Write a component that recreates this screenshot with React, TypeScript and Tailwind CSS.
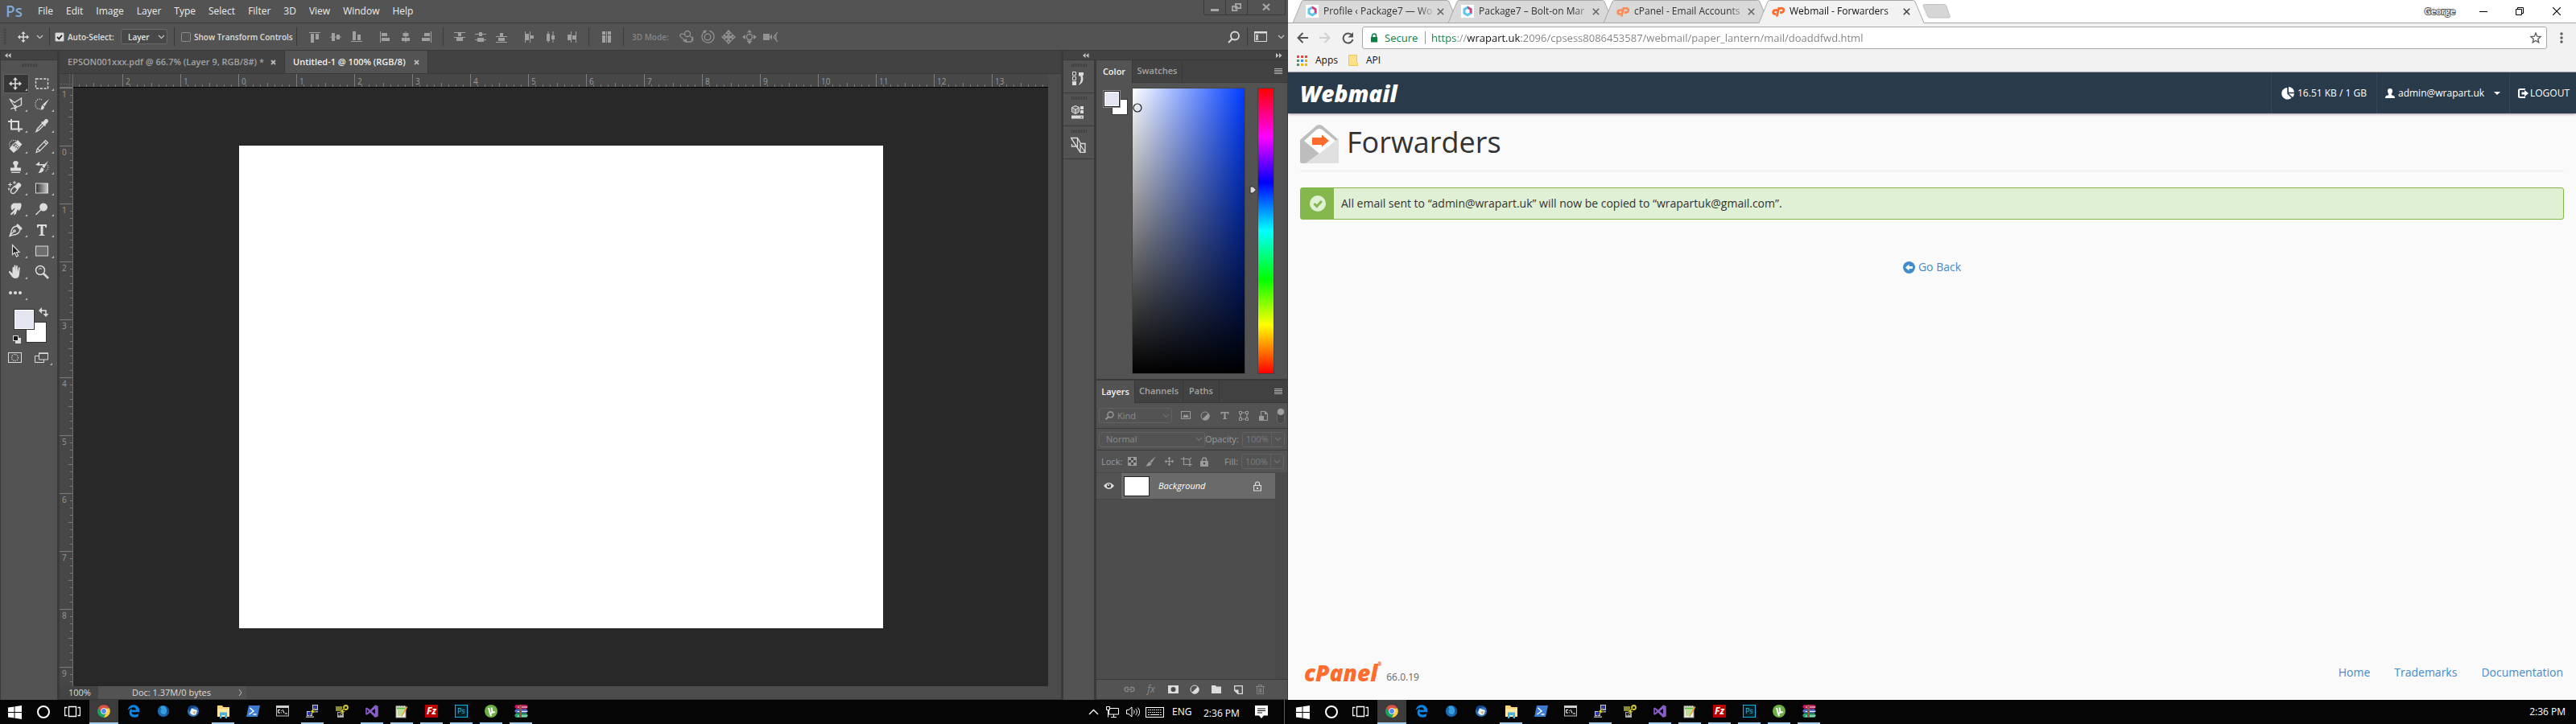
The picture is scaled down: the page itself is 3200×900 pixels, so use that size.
import React from "react";
import type { ReactNode } from "react";
import { FaEdgeLegacy } from "react-icons/fa6";
import { DiVisualstudio } from "react-icons/di";

const light = "#dcdcdc";

function Svg({ w = 18, h = 18, box, className = "", children }: { w?: number; h?: number; box?: string; className?: string; children: ReactNode }) {
  return (
    <svg width={w} height={h} viewBox={box ?? `0 0 ${w} ${h}`} className={`shrink-0 ${className}`} aria-hidden="true">
      {children}
    </svg>
  );
}

/* ---------- shared glyphs ---------- */

const movePath =
  "M9 1l3 3.4H9.8v3.8h3.8V6L17 9l-3.4 3V9.8H9.8v3.8H12L9 17l-3-3.4h2.2V9.8H4.4V12L1 9l3.4-3v2.2h3.8V4.4H6z";

function Chevron({ stroke = "#c8c8c8", className = "" }: { stroke?: string; className?: string }) {
  return (
    <Svg w={9} h={6} className={className}>
      <path d="M1 1l3.5 3.5L8 1" fill="none" stroke={stroke} strokeWidth="1.2" />
    </Svg>
  );
}

function Divider() {
  return <span className="h-[23px] w-px shrink-0 bg-[#3a3a3a]" />;
}

function Cell({ w, children, label }: { w: string; children: ReactNode; label: string }) {
  return (
    <button aria-label={label} className={`flex h-6 shrink-0 items-center justify-center ${w}`}>
      {children}
    </button>
  );
}

/* ---------- Photoshop: menu and options ---------- */

const menus = ["File", "Edit", "Image", "Layer", "Type", "Select", "Filter", "3D", "View", "Window", "Help"];

function MenuBar() {
  return (
    <header className="flex h-[29px] shrink-0 items-start justify-between border-b border-[#383838] bg-[#535353]">
      <div className="flex h-7 items-center">
        <span className="w-[47px] pl-[7px] text-[19px] leading-6 font-semibold text-[#7fa9d6]">Ps</span>
        <nav className="flex gap-4">
          {menus.map((m) => (
            <button key={m} className="text-[12px] leading-4 text-[#ececec]">
              {m}
            </button>
          ))}
        </nav>
      </div>
      <div className="mr-[3px] flex h-[19px] rounded-b-[3px] border border-t-0 border-[#3c3c3c]">
        <button aria-label="Minimize" className="flex w-[27px] items-center justify-center border-r border-[#3c3c3c]">
          <Svg w={12} h={12}><rect x="1" y="8" width="10" height="3" fill="#a8a8a8" /></Svg>
        </button>
        <button aria-label="Restore" className="flex w-[27px] items-center justify-center border-r border-[#3c3c3c]">
          <Svg w={12} h={12}>
            <path d="M4.8 1.8h6.4v5.4H4.8zM1 4.8h5.4v5.4H1z" fill="#535353" stroke="#a8a8a8" strokeWidth="1.7" />
          </Svg>
        </button>
        <button aria-label="Close" className="flex w-[46px] items-center justify-center">
          <Svg w={12} h={12}><path d="M2 2l8 7.5M10 2L2 9.5" stroke="#a8a8a8" strokeWidth="2.2" /></Svg>
        </button>
      </div>
    </header>
  );
}

const alignIcons: Record<string, ReactNode> = {
  "Align top": <path d="M0 1h14v1H0zM2 3h4v11H2zM8 3h4v7H8z" />,
  "Align middle": <path d="M0 6.500h14v1H0zM2 2h4v10H2zM8 4h4v6H8z" />,
  "Align bottom": <path d="M0 12h14v1H0zM2 0h4v11H2zM8 4h4v7H8z" />,
  "Align left": <path d="M1 0h1v14H1zM3 2h7v4H3zM3 8h10v4H3z" />,
  "Align center": <path d="M6.500 0h1v14h-1zM3.500 2h7v4h-7zM2 8h10v4H2z" />,
  "Align right": <path d="M12 0h1v14h-1zM4 2h7v4H4zM1 8h10v4H1z" />,
  "Distribute top": <path d="M0 1h14v1H0zM5 2h4v4H5zM0 7h14v1H0zM3 8h8v4H3z" />,
  "Distribute vertical": <path d="M0 3h14v1H0zM5 1h4v5H5zM0 10h14v1H0zM3 8h8v5H3z" />,
  "Distribute bottom": <path d="M0 6h14v1H0zM5 2h4v4H5zM0 13h14v1H0zM3 8h8v4H3z" />,
  "Distribute left": <path d="M1 0h1v14H1zM2 3h4v8H2zM7 0h1v14H7zM8 5h4v4H8z" />,
  "Distribute horizontal": <path d="M3.500 0h1v14h-1zM2 3h4v9H2zM9.500 0h1v14h-1zM8 5h4v5H8z" />,
  "Distribute right": <path d="M6 0h1v14H6zM2 4h4v7H2zM12 0h1v14h-1zM8 5h4v5H8z" />,
  "Auto-align": <path d="M2 0h4v4H2zM2 5h4v9H2zM7 0h1v14H7zM9 0h4v4H9zM9 5h4v9H9z" />,
};

function AlignButton({ name }: { name: string }) {
  return (
    <Cell w="w-[26px]" label={name}>
      <Svg w={14} h={14}>
        <g fill="#a0a0a0">{alignIcons[name]}</g>
      </Svg>
    </Cell>
  );
}

function Check({ id, label, on }: { id: string; label: string; on?: boolean }) {
  return (
    <label htmlFor={id} className="flex shrink-0 items-center gap-1 text-[10px] leading-4 font-semibold whitespace-nowrap text-[#dedede]">
      <span className="grid">
        <input
          id={id}
          type="checkbox"
          defaultChecked={on}
          className="peer col-start-1 row-start-1 size-[12px] appearance-none rounded-[2px] border border-[#8a8a8a] checked:bg-[#dcdcdc]"
        />
        <Svg w={12} h={12} className="pointer-events-none invisible col-start-1 row-start-1 peer-checked:visible">
          <path d="M3 6l2.300 2.300L9 3.800" fill="none" stroke="#222" strokeWidth="1.800" />
        </Svg>
      </span>
      {label}
    </label>
  );
}

function Picker({ label, value, width, dim, pad = "pl-2" }: { label: string; value: string; width: string; dim?: boolean; pad?: string }) {
  return (
    <span className={`grid shrink-0 items-center ${width}`}>
      <select
        aria-label={label}
        className={`col-start-1 row-start-1 h-[19px] w-full appearance-none rounded-[3px] border leading-4 ${pad} ${
          dim ? "border-[#626262] text-[11px] text-[#8c8c8c]" : "border-[#6a6a6a] bg-[#484848] text-[10px] font-semibold text-[#e4e4e4]"
        }`}
      >
        <option>{value}</option>
      </select>
      <Chevron stroke={dim ? "#707070" : "#c8c8c8"} className="pointer-events-none col-start-1 row-start-1 mr-[3px] justify-self-end" />
    </span>
  );
}

function OptionsBar() {
  return (
    <div className="flex h-[34px] shrink-0 items-center justify-between border-b border-[#383838] bg-[#535353]">
      <div className="flex items-center">
        <Svg w={9} h={20} className="ml-1"><path d="M2 0v20" stroke="#3f3f3f" strokeWidth="3" strokeDasharray="1 1" /></Svg>
        <Cell w="ml-2 w-4" label="Move tool"><Svg w={16} h={16} box="0 0 18 18"><path d={movePath} fill={light} /></Svg></Cell>
        <Cell w="w-6" label="Tool presets"><Chevron /></Cell>
        <Divider />
        <div className="flex w-[154px] items-center justify-between pr-2 pl-[6px]">
          <Check id="auto-select" label="Auto-Select:" on />
          <Picker label="Auto-select target" value="Layer" width="w-[58px]" />
        </div>
        <Divider />
        <div className="w-[151px] pl-2">
          <Check id="show-transform" label="Show Transform Controls" />
        </div>
        <Divider />
        <div className="flex w-[181px] items-center pl-[9px]">
          {["Align top", "Align middle", "Align bottom"].map((n) => <AlignButton key={n} name={n} />)}
          <span className="w-[9px]" />
          {["Align left", "Align center", "Align right"].map((n) => <AlignButton key={n} name={n} />)}
        </div>
        <Divider />
        <div className="flex w-[180px] items-center pl-[7px]">
          {["Distribute top", "Distribute vertical", "Distribute bottom"].map((n) => <AlignButton key={n} name={n} />)}
          <span className="w-[9px]" />
          {["Distribute left", "Distribute horizontal", "Distribute right"].map((n) => <AlignButton key={n} name={n} />)}
        </div>
        <Divider />
        <div className="flex w-[42px] justify-center"><AlignButton name="Auto-align" /></div>
        <Divider />
        <span className="w-[65px] pl-[10px] text-[10px] leading-4 font-semibold whitespace-nowrap text-[#868686]">3D Mode:</span>
        <div className="flex">
          <Cell w="w-[26px]" label="Orbit">
            <Svg>
              <g fill="none" stroke="#929292" strokeWidth="1.3"><circle cx="10" cy="5" r="3.500" /><path d="M7 6C0 3-1 8 4 11l3 2M13 8c5 2 5 6 0 7H8M15 13l2-4" /></g>
              <path d="M4 14l5-3v5z" fill="#929292" />
            </Svg>
          </Cell>
          <Cell w="w-[26px]" label="Roll">
            <Svg>
              <g fill="none" stroke="#929292" strokeWidth="1.300"><circle cx="9" cy="9" r="3.800" /><path d="M6 2a7.500 7.500 0 1 0 5-.700" /></g>
              <path d="M3 1l5-.500-2 4z" fill="#929292" />
            </Svg>
          </Cell>
          <Cell w="w-[26px]" label="Pan"><Svg><path d={movePath} fill="none" stroke="#929292" strokeWidth="1.400" /></Svg></Cell>
          <Cell w="w-[26px]" label="Slide">
            <Svg>
              <circle cx="9" cy="9" r="3.500" fill="none" stroke="#929292" strokeWidth="1.400" />
              <path d="M9 0l3 3.500H6zM0 9l4-3v6zM18 9l-4-3v6zM9 18l-3.500-4.500h7z" fill="#929292" />
            </Svg>
          </Cell>
          <Cell w="w-[26px]" label="Zoom camera">
            <Svg>
              <path d="M0 5h8v8H0zM8 9l3-4v8z" fill="#929292" /><path d="M18 3l-5 6 5 6M16 5v8" fill="none" stroke="#929292" strokeWidth="1.200" />
            </Svg>
          </Cell>
        </div>
      </div>
      <div className="flex items-center">
        <Cell w="w-8" label="Search">
          <Svg w={16} h={16}><circle cx="9" cy="6.500" r="5" fill="none" stroke={light} strokeWidth="1.800" /><path d="M5.500 10.500L1 15" stroke={light} strokeWidth="2" /></Svg>
        </Cell>
        <Divider />
        <Cell w="w-8" label="Workspace">
          <Svg w={16} h={14}><path d="M.5 1.500h15v11H.5z" fill="none" stroke={light} /><path d="M0 0h16v2.500H0zM2 4h3v7H2z" fill={light} /><path d="M3 5h1v1H3zM3 7h1v1H3zM3 9h1v1H3z" fill="#535353" /></Svg>
        </Cell>
        <Cell w="w-[18px]" label="Workspace menu"><Chevron /></Cell>
      </div>
    </div>
  );
}

/* ---------- Photoshop: toolbox ---------- */

const tools: { name: string; art: ReactNode; plain?: boolean }[] = [
  { name: "Move", art: <path d={movePath} fill={light} /> },
  { name: "Marquee", art: <rect x="1.500" y="3" width="15" height="12" fill="none" stroke={light} strokeWidth="1.300" strokeDasharray="3.200 1.600" /> },
  { name: "Lasso", art: <path d="M2 2l6 4.500L16.500 1v8.500L9 13 2 2zM8 10c3 0 3 4 0 3.500S4 14 3.500 15M8 13l2 4" fill="none" stroke={light} strokeWidth="1.300" /> },
  {
    name: "Quick selection",
    art: (
      <g>
        <path d="M9 3C5 1 1 3 1 8.500S4 15 8 14" fill="none" stroke={light} strokeWidth="1.300" strokeDasharray="1 1.500" />
        <path d="M18 2l-5.500 9-2.500-2zM9.500 9.500l2.500 2.300c0 2.700-2 4.200-5 3.700 2-1 .500-4 2.500-6z" fill={light} />
      </g>
    ),
  },
  { name: "Crop", art: <path d="M0 4h13v9M4 1v12.500h14M13.500 13v4" fill="none" stroke={light} strokeWidth="2" /> },
  {
    name: "Eyedropper",
    art: (
      <g>
        <path d="M10 6l2 2-7 7-3 1.500L3.500 13z" fill="none" stroke={light} strokeWidth="1.400" />
        <path d="M8 5l1.500-1 1 .500L13 1.500c2-1.500 5 .500 3.500 3.500l-3 2.700.500 1.300-1.300 1z" fill={light} />
      </g>
    ),
  },
  {
    name: "Healing brush",
    art: (
      <g>
        <path d="M10 2C5 0 0 3 2 9" fill="none" stroke={light} strokeDasharray="1.300 1.300" />
        <path d="M12 1l5.500 5.500-3 3L9 4zM5 7.500l6 6L7 17 1.500 11.500z" fill={light} />
        <path d="M9 4l5.500 5.500-3.500 4-6-6z" fill="#777" stroke={light} />
        <path d="M9 7h1.500v1.500H9zM11 8.500h1.500V10H11zM7.500 9H9v1.500H7.500zM9.500 10.500H11V12H9.500z" fill="#eee" />
      </g>
    ),
  },
  { name: "Pencil", art: <path d="M13.500 1.500l3 3L6 15l-4 1.500L3.300 12zM12 3.500l3 3M4 12l2.500 2.500" fill="none" stroke={light} strokeWidth="1.200" /> },
  { name: "Clone stamp", art: <path d="M9.500 1c3.500 0 4 3 2.500 4.500-1 1.500-1 3-.500 4H16v4H3v-4h4.500c.500-1 .500-2.500-.500-4C5.500 4 6 1 9.500 1zM4 14.700h11V16H4z" fill={light} /> },
  {
    name: "History brush",
    art: (
      <g>
        <path d="M1 6l5-4v3h6v1.500H6V7zM17 1l-5 9-3-2zM8.500 9l3 2c0 3-3 5-7 5 2.500-2 2-5 4-7z" fill={light} />
        <path d="M16 6c2 4 0 7-3 8" fill="none" stroke={light} strokeDasharray="1.300 1.300" />
      </g>
    ),
  },
  {
    name: "Eraser",
    art: (
      <g>
        <path d="M11 3.500c1.500-1.500 2.500-2 4-.500s2 2.500.500 4L12 10.500 8 6.500z" fill={light} />
        <path d="M8 6.500L4.500 10c-3 4 1 7 4 4.500l3.500-4z" fill="none" stroke={light} strokeWidth="1.400" />
        <path d="M2.500 2v5M0 4.500h5M8 0v4M6 2h4M1 8.500v3M-.500 10h3" stroke={light} />
      </g>
    ),
  },
  {
    name: "Gradient",
    art: (
      <g>
        <defs><linearGradient id="tool-gradient"><stop offset="0" stopColor="#333" /><stop offset="1" stopColor="#ccc" /></linearGradient></defs>
        <rect x="1.500" y="3" width="15" height="12" fill="url(#tool-gradient)" stroke={light} />
      </g>
    ),
  },
  { name: "Smudge", art: <path d="M4 9c-1-4 0-6 3-7.500h9c1 3 .500 5-.500 7L13 11.500V9l-2 2c-1 3-1 5-4 5.500l1-3.500-4 3.500C2 16 4 13.500 6 12l3-4.500C7 8 6 9.500 5 10.500z" fill={light} /> },
  { name: "Dodge", art: <path d="M11 1.500a5 5 0 1 1-3 9l-6 6-1-1 6-6c-2-4 0-8 4-8z" fill={light} /> },
  {
    name: "Pen",
    art: (
      <g fill="none" stroke={light} strokeWidth="1.300">
        <path d="M11 4l4 4.500c-1 4-3 6-8 6.500l-5 1.500L4 11c.500-4 3-6.500 7-7zM2 16l5-5" /><circle cx="8" cy="10" r="1.200" /><path d="M11 2l6 6" strokeWidth="2.500" />
      </g>
    ),
  },
  { name: "Type", art: <path d="M3 2h12v4h-1.500l-.500-2h-2.500v10.500l2 .500v1h-7v-1l2-.500V4H5l-.500 2H3z" fill={light} /> },
  { name: "Path selection", art: <path d="M5.500 1.500v12l3-2.500 2 5 2-1-2-4.500h3.500z" fill="#1c1c1c" stroke={light} strokeWidth="1.200" /> },
  { name: "Rectangle", art: <rect x="1.500" y="3" width="15" height="12" fill="#6e6e6e" stroke={light} /> },
  { name: "Hand", art: <path d="M5.500 11V4c0-1.500 2-1.500 2 0v4-6.500c0-1.500 2-1.500 2 0V8l.500-6c.200-1.200 2-1.200 1.800 0L12 8.500l1-4.500c.300-1.200 1.800-1 1.700.300l-.700 8c-.500 3-1.500 4.700-4.500 4.700-3.500 0-4.500-2-6-4L1 9.500C.5 8 2 7.500 3 8.500z" fill={light} /> },
  { name: "Zoom", art: <g fill="none" stroke={light}><circle cx="7" cy="7" r="5.500" strokeWidth="1.500" /><path d="M11 11l6 6" strokeWidth="2.500" /><path d="M5 5.500a3 3 0 0 1 4 0" /></g>, plain: true },
  { name: "More tools", art: <g fill={light}><circle cx="3" cy="9" r="2" /><circle cx="9" cy="9" r="2" /><circle cx="15" cy="9" r="2" /></g> },
];

function Corner() {
  return <Svg w={3} h={3} className="absolute right-px bottom-[2px]"><path d="M3 0v3H0z" fill="#b8b8b8" /></Svg>;
}

function Toolbox() {
  return (
    <aside className="flex w-[74px] shrink-0 flex-col border-r-[3px] border-l border-[#3a3a3a] bg-[#535353]">
      <div className="flex h-3 items-center border-b border-[#383838] bg-[#424242] pl-[5px]">
        <Svg w={8} h={6}><path d="M3.500 0v6L0 3zM7.500 0v6L4 3z" fill="#c4c4c4" /></Svg>
      </div>
      <div className="flex h-[17px] items-start justify-center pt-1">
        <Svg w={19} h={4}><path d="M0 2h19" stroke="#3d3d3d" strokeWidth="4" strokeDasharray="1 1" /></Svg>
      </div>
      <div className="grid grid-cols-2 gap-x-px gap-y-[2px] pr-[2px] pl-[3px]">
        {tools.map((t, i) => (
          <button
            key={t.name}
            aria-label={t.name}
            className={`relative flex h-6 w-8 items-center rounded-[2px] border pl-[5px] ${i === 0 ? "border-[#666] bg-[#363636]" : "border-transparent"}`}
          >
            <Svg>{t.art}</Svg>
            {!t.plain && <Corner />}
          </button>
        ))}
      </div>
      <Svg w={46} h={46} className="mt-[6px] ml-[15px]">
        <rect x="16.500" y="18.500" width="25" height="25" fill="#fff" stroke="#333" />
        <rect x="1.500" y="2.500" width="25" height="25" fill="#fff" stroke="#333" />
        <rect x="3" y="4" width="22" height="22" fill="#e3e6f1" />
        <path d="M34 4h7v5" fill="none" stroke={light} strokeWidth="1.500" /><path d="M36 0v8l-4-4zM37.500 8h7L41 12z" fill={light} />
        <rect x="3" y="38" width="7" height="7" fill={light} /><rect x=".5" y="35.500" width="6" height="6" fill="#151515" stroke={light} />
      </Svg>
      <div className="mt-[10px] flex gap-4 pl-[9px]">
        <Svg w={17} h={14}><rect x=".5" y=".5" width="16" height="12" fill="none" stroke={light} /><circle cx="8.500" cy="6.500" r="4" fill="none" stroke={light} strokeWidth="1.200" strokeDasharray="1.200 1.200" /></Svg>
        <Svg w={22} h={16}><path d="M.5 4.500h11v8H.5z" fill="none" stroke={light} /><path d="M5.500 1h11v8h-11z" fill="#535353" stroke={light} /><path d="M5 .5h12V2H5z" fill={light} /><path d="M22 13v3h-3z" fill="#b8b8b8" /></Svg>
      </div>
    </aside>
  );
}

/* ---------- Photoshop: document ---------- */

const range = (from: number, to: number) => Array.from({ length: to - from + 1 }, (_, k) => from + k);
const topTicks = range(-22, 111);
const sideTicks = range(-8, 82);
const tickLength = (i: number) => (i % 8 === 0 ? 16 : i % 4 === 0 ? 5 : 3);

function TopRuler() {
  return (
    <svg className="h-4 w-full" aria-hidden="true">
      {topTicks.map((i) => (
        <rect key={i} x={205 + i * 9} y={16 - tickLength(i)} width="1" height={tickLength(i)} fill="#7c7c7c" />
      ))}
      {topTicks.filter((i) => i % 8 === 0).map((i) => (
        <text key={i} x={209 + i * 9} y="13" fontSize="10" fill="#9a9a9a">{Math.abs(i / 8)}</text>
      ))}
    </svg>
  );
}

function SideRuler() {
  return (
    <svg className="h-full w-4" aria-hidden="true">
      {sideTicks.map((i) => (
        <rect key={i} y={72 + i * 9} x={16 - tickLength(i)} height="1" width={tickLength(i)} fill="#7c7c7c" />
      ))}
      {sideTicks.filter((i) => i % 8 === 0 && i < 80).map((i) => (
        <text key={i} y={84 + i * 9} x="3" fontSize="10" fill="#9a9a9a">{Math.abs(i / 8)}</text>
      ))}
    </svg>
  );
}

function DocTab({ title, active, width }: { title: string; active?: boolean; width: string }) {
  return (
    <div className={`flex shrink-0 items-center justify-between border-r border-[#363636] pr-[10px] pl-[10px] text-[11px] leading-4 font-semibold whitespace-nowrap ${width} ${active ? "bg-[#535353] text-[#f0f0f0]" : "text-[#a2a2a2]"}`}>
      <button>{title}</button>
      <button aria-label={`Close ${title}`}>
        <Svg w={7} h={7}><path d="M1 1l5 5M6 1L1 6" stroke="#b8b8b8" strokeWidth="1.800" /></Svg>
      </button>
    </div>
  );
}

function Document() {
  return (
    <main className="flex min-w-0 flex-1 flex-col bg-[#4b4b4b]">
      <div className="flex h-[29px] shrink-0 border-b border-[#383838] bg-[#424242]">
        <DocTab title="EPSON001xxx.pdf @ 66.7% (Layer 9, RGB/8#) *" width="w-[280px]" />
        <DocTab title="Untitled-1 @ 100% (RGB/8)" width="w-[178px]" active />
      </div>
      <div className="grid min-h-0 flex-1 grid-cols-[17px_1fr_16px] grid-rows-[17px_1fr]">
        <div className="flex items-end justify-end border-r border-b border-[#6c6c6c] bg-[#474747]">
          <Svg w={16} h={16}><path d="M0 12.500h16M12.500 0v16" stroke="#707070" strokeDasharray="1 1" /></Svg>
        </div>
        <div className="overflow-hidden border-b border-black bg-[#474747]"><TopRuler /></div>
        <div />
        <div className="min-h-0 overflow-hidden border-r border-[#6c6c6c] bg-[#474747]"><SideRuler /></div>
        <div className="flex min-h-0 items-center justify-center overflow-hidden bg-[#282828]">
          <div className="h-[600px] w-[800px] bg-white" />
        </div>
        <div />
      </div>
      <footer className="flex h-[17px] shrink-0 items-center border-b border-[#383838] text-[11px] leading-4 text-[#dcdcdc]">
        <span className="w-12 bg-[#444] pl-[11px]">100%</span>
        <span className="flex h-4 w-[184px] items-center justify-between bg-[#535353] pr-[5px] pl-[42px]">
          Doc: 1.37M/0 bytes
          <Svg w={5} h={10}><path d="M1 1l3 4-3 4" fill="none" stroke="#c0c0c0" /></Svg>
        </span>
      </footer>
    </main>
  );
}

/* ---------- Photoshop: right hand panels ---------- */

const dockArt: { name: string; art: ReactNode }[] = [
  {
    name: "History",
    art: <g><path d="M2.500 1.500h4v4h-4zM2.500 7.500h4v4h-4z" fill="none" stroke={light} /><path d="M2 13h5v5H2zM10 2h6v4l-1.500-.500c2 5 1 9-3.500 12h-1c3-4 3.500-8 2-11.500L10 7z" fill={light} /></g>,
  },
  {
    name: "Libraries",
    art: <g><path d="M1.500 4.500L6 2.500l4.500 2V10L6 12.500 1.500 10zM1.500 4.500L6 7l4.500-2.500M6 7v5.500" fill="#8a8a8a" stroke={light} /><path d="M12 3h4v4h-4zM12 8h4v4h-4zM1 14.500h15v4H1z" fill={light} /><path d="M12 16h3l-1.500 1.500z" fill="#555" /></g>,
  },
  {
    name: "Clone source",
    art: <g><path d="M.5 1.500h8l4 7h5.500v11H12zM1 2l11 17M8.500 2v10h-7V9M12 9v10M18 19l-6-9" fill="none" stroke={light} strokeWidth="1.300" /></g>,
  },
];

function Dock() {
  return (
    <div className="flex w-[41px] flex-col border-r-[3px] border-[#3a3a3a] bg-[#535353]">
      {dockArt.map((d) => (
        <button key={d.name} aria-label={d.name} className="flex h-[41px] flex-col items-center gap-[5px] border-b border-[#3a3a3a] pt-1">
          <Svg w={19} h={4}><path d="M0 2h19" stroke="#3d3d3d" strokeWidth="4" strokeDasharray="1 1" /></Svg>
          <Svg w={20} h={20}>{d.art}</Svg>
        </button>
      ))}
    </div>
  );
}

function PanelTabs({ tabs }: { tabs: [string, string][] }) {
  return (
    <div className="flex h-7 shrink-0 items-stretch border-b border-[#383838] bg-[#424242] text-[11px] font-semibold">
      {tabs.map(([t, w], i) => (
        <button key={t} className={`-mb-px border-r border-[#383838] text-center ${w} ${i === 0 ? "bg-[#535353] text-[#f2f2f2]" : "border-b text-[#a2a2a2]"}`}>
          {t}
        </button>
      ))}
      <button aria-label="Panel menu" className="mr-[6px] ml-auto">
        <Svg w={10} h={8}><path d="M0 .5h10M0 2.500h10M0 4.500h10M0 6.500h10" stroke="#b0b0b0" /></Svg>
      </button>
    </div>
  );
}

function ColorPanel() {
  return (
    <section className="flex h-[397px] shrink-0 flex-col border-b border-[#383838] bg-[#535353]">
      <PanelTabs tabs={[["Color", "w-[45px]"], ["Swatches", "w-[62px]"]]} />
      <div className="flex flex-1 pt-[6px] pr-4 pb-[6px] pl-2">
        <Svg w={32} h={34} className="mt-[3px]">
          <rect x="11.500" y="11.500" width="19" height="19" fill="#fff" stroke="#333" />
          <rect x="0" y="0" width="22" height="22" fill="#8c8c8c" /><rect x="1" y="1" width="20" height="20" fill="#222" /><rect x="2" y="2" width="18" height="18" fill="#fff" /><rect x="3" y="3" width="16" height="16" fill="#e3e6f0" />
        </Svg>
        <div className="relative ml-1 min-w-0 flex-1 border border-[#444] bg-[linear-gradient(to_bottom,transparent,#000),linear-gradient(to_right,#fff,#003cff)]">
          <Svg w={12} h={12} className="absolute top-[18px] left-0"><circle cx="6" cy="6" r="5" fill="none" stroke="#222" strokeWidth="1.200" /></Svg>
        </div>
        <div className="relative ml-[9px] w-[27px] pl-[6px]">
          <div className="h-full border border-[#444] bg-[linear-gradient(to_bottom,#f00,#f0f_17%,#00f_33%,#0ff_50%,#0f0_67%,#ff0_83%,#f00)]" />
          <input type="range" aria-label="Hue" className="absolute inset-0 h-full w-full cursor-pointer opacity-0 [writing-mode:vertical-lr]" />
          <Svg w={10} h={10} className="pointer-events-none absolute top-[122px] -left-1"><path d="M1 1h3.500L8.500 5l-4 4H1z" fill={light} stroke="#2a2a2a" /></Svg>
        </div>
      </div>
    </section>
  );
}

const dim = "#9a9a9a";

function Percent({ label }: { label: string }) {
  return (
    <label className="ml-auto flex items-center gap-1 text-[11px] leading-4 text-[#9a9a9a]">
      {label}
      <span className="flex h-[19px] w-[53px] rounded-[3px] border border-[#626262]">
        <input defaultValue="100%" className="w-[36px] border-r border-[#626262] bg-transparent pl-1 text-[11px] text-[#7c7c7c]" />
        <span className="flex flex-1 items-center justify-center"><Chevron stroke="#707070" /></span>
      </span>
    </label>
  );
}

function LayersPanel() {
  return (
    <section className="flex min-h-0 flex-1 flex-col border-t border-[#383838] bg-[#535353]">
      <PanelTabs tabs={[["Layers", "w-[48px]"], ["Channels", "w-[60px]"], ["Paths", "w-[45px]"]]} />
      <div className="flex h-8 shrink-0 items-center border-b border-[#3a3a3a] pl-[3px]">
        <span className="grid items-center">
          <span className="col-start-1 row-start-1"><Picker label="Filter kind" value="Kind" width="w-[91px]" dim pad="pl-[22px]" /></span>
          <Svg w={11} h={11} className="pointer-events-none col-start-1 row-start-1 ml-2"><circle cx="6.500" cy="4.500" r="3.500" fill="none" stroke={dim} strokeWidth="1.400" /><path d="M4 7L.5 10.500" stroke={dim} strokeWidth="1.800" /></Svg>
        </span>
        <div className="ml-[5px] flex">
          <Cell w="w-6" label="Pixel layers"><Svg w={12} h={11}><rect x=".5" y=".5" width="11" height="9" fill="none" stroke={dim} /><path d="M2 8l2.500-4 1.500 2 1.500-2L10 8z" fill={dim} /></Svg></Cell>
          <Cell w="w-6" label="Adjustment layers"><Svg w={12} h={12}><circle cx="6" cy="6" r="5" fill="none" stroke={dim} /><path d="M10 2.500A5 5 0 0 1 2.500 10z" fill={dim} /></Svg></Cell>
          <Cell w="w-6" label="Type layers"><Svg w={11} h={11}><path d="M.5 1h10v3h-1L9 2.500H6.500v6L8 9.500v.500H3v-.500l1.500-1v-6H2L1.500 4h-1z" fill={dim} /></Svg></Cell>
          <Cell w="w-6" label="Shape layers"><Svg w={12} h={12}><path d="M2 2h8v8H2z" fill="none" stroke={dim} strokeWidth="1.200" /><path d="M.5.500h3v3h-3zM8.500.500h3v3h-3zM.5 8.500h3v3h-3zM8.500 8.500h3v3h-3z" fill="#535353" stroke={dim} /></Svg></Cell>
          <Cell w="w-6" label="Smart objects"><Svg w={12} h={12}><path d="M3.500 6V.5h5l3 3v8h-5" fill="none" stroke={dim} strokeWidth="1.200" /><path d="M8 0v4h4zM1 6h6v6H1z" fill={dim} /></Svg></Cell>
        </div>
        <Svg w={10} h={20} className="mr-[3px] ml-auto"><rect x=".5" y=".5" width="9" height="19" rx="4.500" fill="#484848" stroke="#666" /><circle cx="5" cy="5" r="4" fill="#a0a0a0" /></Svg>
      </div>
      <div className="flex h-[27px] shrink-0 items-center border-b border-[#3a3a3a] pr-1 pl-[3px]">
        <Picker label="Blend mode" value="Normal" width="w-[132px]" dim />
        <Percent label="Opacity:" />
      </div>
      <div className="flex h-[27px] shrink-0 items-center pr-1 pl-[6px]">
        <span className="w-[27px] text-[11px] leading-4 text-[#9a9a9a]">Lock:</span>
        <Cell w="w-[23px]" label="Lock transparency"><Svg w={11} h={11}><rect x=".5" y=".5" width="10" height="10" fill="#4a4a4a" stroke={dim} /><path d="M1 1h3v3H1zM7 1h3v3H7zM4 4h3v3H4zM1 7h3v3H1zM7 7h3v3H7z" fill={dim} /></Svg></Cell>
        <Cell w="w-[23px]" label="Lock pixels"><Svg w={13} h={13}><path d="M13 0L7.500 8.500l-2-2zM5 7l2.500 2.300C7 12 4 13 0 12.500 2.500 11 2.500 8 5 7z" fill={dim} /></Svg></Cell>
        <Cell w="w-[22px]" label="Lock position"><Svg w={13} h={13} box="0 0 18 18"><path d={movePath} fill={dim} /></Svg></Cell>
        <Cell w="w-[22px]" label="Lock artboard"><Svg w={14} h={12}><path d="M3.500 0v9.500H14M0 2.500h9.500L11 4v8M13 1l-2 1.500" fill="none" stroke={dim} strokeWidth="1.200" /></Svg></Cell>
        <Cell w="w-[22px]" label="Lock all"><Svg w={10} h={12}><path d="M2.500 5V3.500a2.500 2.500 0 0 1 5 0V5" fill="none" stroke={dim} strokeWidth="1.500" /><rect y="5" width="10" height="7" fill={dim} /><rect x="4" y="7" width="2" height="2" fill="#444" /></Svg></Cell>
        <Percent label="Fill:" />
      </div>
      <div className="flex min-h-0 flex-1 bg-[#4d4d4d]">
        <div className="flex-1">
          <div className="flex h-[34px] items-stretch border-y border-[#474747]">
            <button aria-label="Toggle visibility" className="flex w-[30px] items-center justify-center bg-[#535353]">
              <Svg w={13} h={10}><path d="M0 5Q6.500-3 13 5 6.500 13 0 5z" fill={light} /><circle cx="6.500" cy="4.800" r="2.600" fill="#444" /><circle cx="6" cy="4" r="1" fill="#eee" /></Svg>
            </button>
            <div className="ml-px flex flex-1 items-center bg-[#6a6a6a] pr-[17px] pl-[3px]">
              <span className="h-[25px] w-8 border border-[#222] bg-white" />
              <span className="ml-[11px] text-[11px] leading-4 text-white italic">Background</span>
              <Svg w={10} h={13} className="ml-auto"><path d="M2.500 5V3.500a2.500 2.500 0 0 1 5 0V5M.5 5.500h9v6.500h-9z" fill="none" stroke={light} strokeWidth="1.200" /><rect x="4" y="8" width="2" height="2" fill={light} /></Svg>
            </div>
          </div>
        </div>
        <div className="w-[15px] bg-[#4a4a4a]" />
      </div>
      <footer className="flex h-[26px] shrink-0 items-center justify-center border-y border-[#383838] pl-[7px]">
        <Cell w="w-[27px]" label="Link layers"><Svg w={14} h={8}><path d="M6 1.500H3.500a2.500 2.500 0 0 0 0 5H6M8 1.500h2.500a2.500 2.500 0 0 1 0 5H8M4 4h6" fill="none" stroke="#858585" strokeWidth="1.400" /></Svg></Cell>
        <Cell w="w-[27px]" label="Layer style"><span className="text-[12px] leading-4 text-[#8c8c8c] italic">fx</span></Cell>
        <Cell w="w-[27px]" label="Add mask"><Svg w={13} h={10}><rect width="13" height="10" fill={light} /><circle cx="6.500" cy="5" r="3" fill="#4a4a4a" /></Svg></Cell>
        <Cell w="w-[27px]" label="Adjustment"><Svg w={12} h={12}><circle cx="6" cy="6" r="5" fill="none" stroke={light} /><path d="M10 2.500A5 5 0 0 1 2.500 10z" fill={light} /></Svg></Cell>
        <Cell w="w-[27px]" label="New group"><Svg w={12} h={10}><path d="M0 0h5l1 1.500h6V10H0z" fill={light} /></Svg></Cell>
        <Cell w="w-[27px]" label="New layer"><Svg w={11} h={11}><path d="M.7.700h9.600v9.600H5L.7 6.500z" fill="none" stroke={light} strokeWidth="1.300" /><path d="M0 5.500h5.500V11z" fill={light} /></Svg></Cell>
        <Cell w="w-[27px]" label="Delete layer"><Svg w={11} h={12}><path d="M0 2.500h11M3.500 2V.5h4V2M1.500 3v8.500h8V3M4 4.500v5.500M5.500 4.500v5.500M7 4.500v5.500" fill="none" stroke="#858585" /></Svg></Cell>
      </footer>
    </section>
  );
}

function Panels() {
  return (
    <aside className="flex w-[282px] shrink-0 flex-col border-r border-l-[3px] border-[#3a3a3a]">
      <div className="flex h-3 shrink-0 items-center justify-between border-b border-[#383838] bg-[#424242] pr-[6px] pl-[24px]">
        <Svg w={8} h={6}><path d="M3.500 0v6L0 3zM7.500 0v6L4 3z" fill="#c4c4c4" /></Svg>
        <Svg w={8} h={6}><path d="M0 0v6l3.500-3zM4 0v6l3.500-3z" fill="#c4c4c4" /></Svg>
      </div>
      <div className="flex min-h-0 flex-1">
        <Dock />
        <div className="flex min-w-0 flex-1 flex-col bg-[#4b4b4b]">
          <ColorPanel />
          <LayersPanel />
        </div>
      </div>
    </aside>
  );
}

function Photoshop() {
  return (
    <div className="flex min-h-0 flex-1 flex-col">
      <MenuBar />
      <OptionsBar />
      <div className="flex min-h-0 flex-1">
        <Toolbox />
        <Document />
        <Panels />
      </div>
    </div>
  );
}

/* ---------- taskbar ---------- */

const sys: { name: string; art: ReactNode }[] = [
  { name: "Start", art: <Svg w={17} h={17}><path d="M0 2.500L7.500 1.500V8H0zM8.500 1.300L17 0v8H8.500zM0 9h7.500v6.500L0 14.500zM8.500 9H17v8l-8.500-1.300z" fill="#fff" /></Svg> },
  { name: "Cortana", art: <Svg w={18} h={18}><circle cx="9" cy="9" r="7" fill="none" stroke="#fff" strokeWidth="2" /></Svg> },
  { name: "Task view", art: <Svg w={20} h={16}><path d="M5.500 1.500h9v12h-9zM3.500 2.500h-3v10h3M16.500 2.500h3v10h-3" fill="none" stroke="#fff" strokeWidth="1.300" /></Svg> },
];

const yellowBolt = <path d="M13 2L5 9h3l-4 5 8-6H9z" fill="#f7ee1d" stroke="#222" strokeWidth=".5" />;

const apps: { name: string; art: ReactNode; open?: boolean; active?: boolean }[] = [
  {
    name: "Chrome", active: true, open: true,
    art: (
      <Svg w={16} h={16}>
        <path d="M1 4.200A8 8 0 0 1 15 4.500H8L4.900 9.700z" fill="#de5246" /><path d="M15 4.500a8 8 0 0 1-7.300 11.500L11 9.700 8 4.500z" fill="#ffce43" /><path d="M1 4.200A8 8 0 0 0 7.700 16l3.300-6.300H4.900z" fill="#1ba261" />
        <circle cx="8" cy="8" r="3.700" fill="#fff" /><circle cx="8" cy="8" r="2.900" fill="#4c8bf5" />
      </Svg>
    ),
  },
  { name: "Edge", art: <FaEdgeLegacy size={16} color="#0c84e4" /> },
  { name: "Firefox", art: <Svg w={16} h={16}><circle cx="8" cy="8" r="7.300" fill="#0f4a84" /><path d="M8 1.500c4 1 5 5 4 8s-4 4-7 2.500C3 10 3 7 5 5l-1-3z" fill="#3a9be0" /><path d="M3 3C0 7 1 12 5 14c5 2 9-1 9.500-6-2 4-5 5-8 3.500S4 7 6 6z" fill="#1d6bb0" /></Svg> },
  { name: "Thunderbird", art: <Svg w={16} h={16}><circle cx="8" cy="8" r="7" fill="#2f76c4" /><path d="M2 3C5 0 11 0 14 4l-4-1-5 2-2 4z" fill="#14437e" /><path d="M6 4.500l7 2.500-1.500 5C9 14 6 13 4 10z" fill="#f2efe8" /><path d="M7 9l4-1-1 4z" fill="#c9a98e" /></Svg> },
  { name: "File Explorer", open: true, art: <Svg w={17} h={17}><path d="M1 1h6l1.500 2H16v12H1z" fill="#f7d774" /><path d="M1 5h15v10H1z" fill="#ffe9a2" /><path d="M4 17V9.500h9V17h-2.500v-4h-4v4z" fill="#3fb2ea" /></Svg> },
  { name: "PowerShell", art: <Svg w={17} h={15}><path d="M3 0h14l-3 14H0z" fill="#3c7bd0" /><path d="M4.500 3l4.500 4-5.500 4M8.500 11h4" fill="none" stroke="#fff" strokeWidth="1.500" /></Svg> },
  { name: "Command Prompt", art: <Svg w={16} h={14}><rect x=".5" y=".5" width="15" height="12.500" fill="#111" stroke="#bbb" /><path d="M0 0h16v3H0z" fill="#cfcfcf" /><path d="M5 5.500H2.500v3.500H5M6.500 6v.800M6.500 8.500v.800M8 5l2 4.500M11 10h3" fill="none" stroke="#fff" /></Svg> },
  { name: "PuTTY", open: true, art: <Svg w={16} h={16}><path d="M8 0h7v7H8zM1 8h7v6H1z" fill="#c9c9c9" /><path d="M9 1h5v4.500H9zM2 9h5v4H2z" fill="#2233c8" /><path d="M9 8h6v1.500H9zM0 14.500h10V16H0z" fill="#a8a8a8" />{yellowBolt}</Svg> },
  { name: "PuTTYgen", art: <Svg w={16} h={16}><path d="M0 2h8v6H0z" fill="#8a8a30" /><path d="M2 9h8v7H2z" fill="#a9a9a9" /><path d="M3 10h5v3H3z" fill="#223" /><circle cx="12.500" cy="3.500" r="2.500" fill="none" stroke="#d8c832" strokeWidth="1.800" />{yellowBolt}</Svg> },
  { name: "Visual Studio", open: true, art: <DiVisualstudio size={22} color="#8a5cc8" /> },
  { name: "Notepad++", open: true, art: <Svg w={16} h={17}><rect x="1" y="2" width="12" height="14" fill="#f3f3ea" stroke="#999" /><path d="M2 4.500h10" stroke="#5b3" strokeWidth="2" /><path d="M3 7h8M3 9h8M3 11h7M3 13h5" stroke="#8bc34a" /><path d="M2 1v2M5 1v2M8 1v2M11 1v2" stroke="#ddd" /><path d="M15.500 3L9 14l-1.500 1.500L8 13l6-11z" fill="#ee9a2b" /></Svg> },
  { name: "FileZilla", open: true, art: <span className="flex size-4 items-center justify-center bg-[#b80000] text-[12px] leading-4 font-bold text-white italic">Fz</span> },
  { name: "Photoshop", open: true, art: <span className="flex size-4 items-center justify-center border border-[#10b5e6] bg-[#061e26] text-[9px] leading-3 text-[#22c4ee]">Ps</span> },
  { name: "uTorrent", open: true, art: <Svg w={16} h={16}><circle cx="8" cy="8" r="8" fill="#6fae46" /><path d="M5 4l1.500 5.500c.500 1.500 3 1.500 3-.500L8.500 3.500M10 8.500c.500 1.500 2 1 2.500 0M6.500 9.500L8 14" fill="none" stroke="#fff" strokeWidth="2" /></Svg> },
  { name: "WinRAR", open: true, art: <Svg w={17} h={16}><path d="M2 0h13l2 3-2 2H2L0 2.500z" fill="#c2185b" /><path d="M2 5.500h13l2 2.500-2 2H2L0 8z" fill="#5b6fc9" /><path d="M2 10.500h13l2 3-2 2.500H2l-2-2.500z" fill="#2e9e74" /><path d="M4 3h12M4 8.500h12M4 14h12" stroke="#eee" /><path d="M6 0h3v16H6z" fill="#8d5a2b" /></Svg> },
];

function Clock() {
  return <button className="text-[12px] leading-4 whitespace-nowrap text-white">2:36 PM</button>;
}

function Taskbar({ tray, label }: { tray?: boolean; label: string }) {
  return (
    <footer aria-label={label} className="flex h-[30px] shrink-0 items-stretch justify-between bg-[#050505]">
      <div className="flex">
        <div className="mr-[3px] flex">
          {sys.map((s) => (
            <button key={s.name} aria-label={s.name} className="flex w-9 items-center justify-center">{s.art}</button>
          ))}
        </div>
        <div className="flex gap-px">
          {apps.map((a) => (
            <button
              key={a.name}
              aria-label={a.name}
              className={`flex w-9 flex-col items-center justify-between ${a.active ? "bg-[#3c3c3c]" : ""}`}
            >
              <span className="flex h-7 items-center">{a.art}</span>
              <span className={`h-[2px] ${a.active ? "w-full" : "w-7"} ${a.open ? "bg-[#a3cdef]" : ""}`} />
            </button>
          ))}
        </div>
      </div>
      {tray ? (
        <div className="flex items-center">
          <Cell w="w-6" label="Hidden icons"><Svg w={13} h={8}><path d="M1 7l5.500-5.500L12 7" fill="none" stroke="#fff" strokeWidth="1.300" /></Svg></Cell>
          <Cell w="w-6" label="Network"><Svg w={16} h={14}><path d="M5 2.500h10.500v7.500H3.500V5M9.500 10v3M6 13.500h7M.5.500h4v4h-4zM2.500 5v8.500" fill="none" stroke="#fff" /></Svg></Cell>
          <Cell w="w-[26px]" label="Volume"><Svg w={17} h={14}><path d="M.5 4.500h2.500L7 1v12L3 9.500H.5zM9 4.500c1.500 1 1.500 4 0 5M11.500 3c2.500 2 2.500 6 0 8M14 1.500c3.500 3 3.500 8 0 11" fill="none" stroke="#fff" /></Svg></Cell>
          <Cell w="w-7" label="Touch keyboard"><Svg w={23} h={13}><rect x=".5" y=".5" width="22" height="12" fill="none" stroke="#fff" /><path d="M3 3.500h17M3 6.500h17" stroke="#fff" strokeDasharray="1.500 1" strokeWidth="1.200" /><path d="M3 9.500h2M6 9.500h11M18 9.500h2" stroke="#fff" /></Svg></Cell>
          <span className="ml-2 w-[39px] text-[12px] leading-4 text-white">ENG</span>
          <span className="w-[61px]"><Clock /></span>
          <Cell w="w-[22px]" label="Notifications"><Svg w={16} h={16}><path d="M0 0h16v12.500h-5L8 16l-3-3.500H0z" fill="#fff" /><path d="M3 4h10M3 6.500h10M3 9h6" stroke="#111" /></Svg></Cell>
          <span className="ml-[17px] h-full w-px bg-[#5a5a5a]" />
          <span className="w-1" />
        </div>
      ) : (
        <div className="flex items-center pr-[13px]"><Clock /></div>
      )}
    </footer>
  );
}

/* ---------- browser ---------- */

function P7() {
  return (
    <Svg w={16} h={16}>
      <rect width="16" height="16" fill="#fff" />
      <path d="M8 1.500l5.500 3.200v6.600L8 14.500l-5.500-3.200V4.700z" fill="#5cc8f0" />
      <path d="M8 1.500l5.500 3.200v6.600l-3-1.800V6L8 4.700z" fill="#d93a7c" /><path d="M8 5l2.500 1.500v3L8 11 5.500 9.500v-3z" fill="#fff" />
    </Svg>
  );
}

function CpanelMark({ color }: { color: string }) {
  return (
    <Svg w={17} h={13}>
      <g fill="none" stroke={color} strokeWidth="2.800">
        <path d="M7 4.700H4.400C2.800 4.700 1.900 5.800 1.700 7s.5 2.400 1.800 2.400H5.200" />
        <path d="M6.200 12.500L8.700 2.400h3.600c1.900 0 2.800 1.200 2.500 2.700s-1.500 2.400-3 2.400H10" />
      </g>
    </Svg>
  );
}

const browserTabs: { title: string; art: ReactNode; active?: boolean }[] = [
  { title: "Profile ‹ Package7 — Wo", art: <P7 /> },
  { title: "Package7 – Bolt-on Mar", art: <P7 /> },
  { title: "cPanel - Email Accounts", art: <CpanelMark color="#f98d5c" /> },
  { title: "Webmail - Forwarders", art: <CpanelMark color="#ff6c2c" />, active: true },
];

function BrowserTab({ title, art, active }: { title: string; art: ReactNode; active?: boolean }) {
  return (
    <div className={`-mr-3 grid h-[29px] w-[205px] shrink-0 grid-cols-1 ${active ? "z-10" : ""}`}>
      <svg width="205" height="29" viewBox="0 0 205 29" className="col-start-1 row-start-1" aria-hidden="true">
        <path d="M0 29L11 2Q12 .5 13.500 .5H191.500Q193 .5 194 2L205 29z" fill={active ? "#f2f2f2" : "#d9d9d9"} />
        <path d="M0 28.500L11 2Q12 .5 13.500 .5H191.500Q193 .5 194 2L205 28.500" fill="none" stroke="#a8a8a8" />
        {!active && <path d="M0 28.500H205" stroke="#a8a8a8" />}
      </svg>
      <div className="z-10 col-start-1 row-start-1 flex h-[29px] min-w-0 items-center pr-[17px] pl-4">
        <span className="flex w-[22px] shrink-0">{art}</span>
        <button className={`min-w-0 flex-1 text-left text-[12px] leading-4 whitespace-nowrap [mask-image:linear-gradient(to_right,#000_118px,transparent_140px)] ${active ? "text-[#111]" : "text-[#333]"}`}>{title}</button>
        <button aria-label={`Close ${title}`} className="ml-1 shrink-0">
          <Svg w={9} h={9}><path d="M.8.800l7.400 7.400M8.200.800L.8 8.200" stroke={active ? "#444" : "#666"} strokeWidth="1.600" /></Svg>
        </button>
      </div>
    </div>
  );
}

const bookmarkColors = ["#e8453c", "#e8453c", "#e8453c", "#3a9d5d", "#4285f4", "#f4a21c", "#3a9d5d", "#f4b400", "#f4b400"];

function BrowserChrome() {
  return (
    <div className="shrink-0 bg-[#f2f2f2]">
      <div className="flex h-[29px] items-center justify-between border-b border-[#a8a8a8] bg-white">
        <div className="flex items-center pl-[6px]">
          {browserTabs.map((t) => <BrowserTab key={t.title} {...t} />)}
          <button aria-label="New tab" className="ml-[10px]">
            <Svg w={35} h={18}><path d="M2.500.500h25q1.500 0 2 1l5 14.500q.300 1-1 1H9q-1.500 0-2-1L1 2Q.5.500 2.500.500z" fill="#d6d6d6" stroke="#c2c2c2" /></Svg>
          </button>
        </div>
        <div className="flex items-center">
          <span className="text-[11px] leading-4 font-semibold text-white [-webkit-text-stroke:2px_#555] [paint-order:stroke_fill]">George</span>
          <Cell w="ml-3 w-[46px]" label="Minimize"><Svg w={10} h={10}><path d="M0 5.500h10" stroke="#000" /></Svg></Cell>
          <Cell w="w-11" label="Restore"><Svg w={10} h={10}><path d="M.5 2.500h7v7h-7zM2.500 2.500v-2h7v7h-2" fill="none" stroke="#000" /></Svg></Cell>
          <Cell w="w-12" label="Close"><Svg w={10} h={10}><path d="M0 0l10 10M10 0L0 10" stroke="#000" strokeWidth="1.100" /></Svg></Cell>
        </div>
      </div>
      <div className="flex h-8 items-center pt-1 pl-1">
        <Cell w="w-7" label="Back"><Svg w={14} h={14}><path d="M14 7H2M7.500 1L1.500 7l6 6" fill="none" stroke="#555" strokeWidth="2" /></Svg></Cell>
        <Cell w="w-7" label="Forward"><Svg w={14} h={14}><path d="M0 7h12M6.500 1l6 6-6 6" fill="none" stroke="#d0d0d0" strokeWidth="2" /></Svg></Cell>
        <Cell w="w-7" label="Reload"><Svg w={15} h={15}><path d="M12.500 4A6 6 0 1 0 13.500 9" fill="none" stroke="#555" strokeWidth="2" /><path d="M14 0v6.500H7.500z" fill="#555" /></Svg></Cell>
        <div className="ml-1 flex h-7 flex-1 items-center rounded-[3px] border border-[#a8a8a8] bg-white pr-[6px] pl-2">
          <Svg w={10} h={12} className="ml-px"><path d="M2.500 5V3.500a2.500 2.500 0 0 1 5 0V5" fill="none" stroke="#0b8043" strokeWidth="1.500" /><rect x="1" y="5" width="8" height="6.500" fill="#0b8043" /></Svg>
          <span className="w-[59px] border-r border-[#999] pl-2 text-[13px] leading-4 text-[#0b8043]">Secure</span>
          <input
            aria-label="Address"
            defaultValue="https://wrapart.uk:2096/cpsess8086453587/webmail/paper_lantern/mail/doaddfwd.html"
            className="ml-[7px] min-w-0 flex-1 bg-[linear-gradient(to_right,#0b8043_32px,#888_32px,#888_45px,#111_45px,#111_111px,#808080_111px)] bg-clip-text text-[13px] leading-5 text-transparent"
          />
          <button aria-label="Bookmark this page"><Svg w={14} h={14}><path d="M7 1l1.700 4.200 4.500.300-3.500 2.900 1.100 4.400L7 10.400l-3.800 2.400 1.100-4.400L.8 5.500l4.500-.300z" fill="none" stroke="#5a5a5a" strokeWidth="1.300" /></Svg></button>
        </div>
        <Cell w="w-9" label="Menu"><Svg w={4} h={14}><g fill="#5a5a5a"><circle cx="2" cy="2" r="1.700" /><circle cx="2" cy="7" r="1.700" /><circle cx="2" cy="12" r="1.700" /></g></Svg></Cell>
      </div>
      <nav className="flex h-[29px] items-center border-b border-[#b0b0b0] pl-[11px] text-[12px] leading-4 text-[#111]">
        <a href="#apps" className="flex w-16 items-center gap-[10px]">
          <Svg w={13} h={13}>{bookmarkColors.map((c, i) => <rect key={i} x={(i % 3) * 5} y={Math.floor(i / 3) * 5} width="3" height="3" fill={c} />)}</Svg>
          Apps
        </a>
        <a href="#api" className="flex items-center gap-[10px]">
          <Svg w={12} h={14}><path d="M.5.500h10v9l1 1v3H.5z" fill="#ffe08a" stroke="#ecc54b" /></Svg>
          API
        </a>
      </nav>
    </div>
  );
}

function WebmailHeader() {
  return (
    <header className="z-10 flex h-[51px] shrink-0 items-stretch justify-between bg-[#293a4a] pl-[15px] text-white shadow-[0_1px_3px_rgba(80,50,90,0.5)]">
      <a href="#home" className="flex items-center text-[28px] leading-8 font-extrabold italic">Webmail</a>
      <div className="flex text-[12px] leading-4">
        <a href="#usage" className="flex w-[131px] items-center gap-1 border-l border-[#33475a] pl-3">
          <Svg w={16} h={16}><path d="M7.300 1v7.500l5.200 5.200A7.300 7.300 0 1 1 7.300 1z" fill="#fff" /><path d="M9 0a7 7 0 0 1 7 6.800H9z" fill="#fff" /><path d="M9.200 8.200H16a7.300 7.300 0 0 1-2 4.700z" fill="#fff" /></Svg>
          16.51 KB / 1 GB
        </a>
        <button className="flex w-[165px] items-center gap-1 border-l border-[#33475a] pr-[11px] pl-[10px]">
          <Svg w={12} h={12}><path d="M6 0c2.500 0 3.300 1.700 3 3.500-.200 1.700-.800 2.500-1.300 3.300 0 1.200.500 1.500 2 2C11.500 9.500 12 10 12 12H0c0-2 .5-2.500 2.300-3.200 1.500-.500 2-.800 2-2C3.800 6 3.200 5.200 3 3.500 2.700 1.700 3.500 0 6 0z" fill="#fff" /></Svg>
          admin@wrapart.uk
          <Svg w={8} h={4} className="ml-auto"><path d="M0 0h8L4 4z" fill="#fff" /></Svg>
        </button>
        <a href="#logout" className="flex w-[83px] items-center gap-[2px] border-l border-[#33475a] pl-[10px]">
          <Svg w={13} h={12}><path d="M8 1.500V1H2.500A1.500 1.500 0 0 0 1 2.500v7A1.500 1.500 0 0 0 2.500 11H8v-1" fill="none" stroke="#fff" strokeWidth="2" /><path d="M4.500 4.500H8V2l5 4-5 4V7.500H4.500z" fill="#fff" /></Svg>
          LOGOUT
        </a>
      </div>
    </header>
  );
}

function WebmailPage() {
  return (
    <div className="flex min-h-0 flex-1 flex-col bg-[#fafafa] px-[15px]">
      <h1 className="flex h-[72px] shrink-0 items-center gap-[10px] border-b border-[#eaeaea] text-[36px] leading-[40px] text-[#333]">
        <Svg w={48} h={48} className="mt-1">
          <path d="M0 19L20 1.500Q24-1.500 28 1.500L48 19v27q0 2-2 2H2q-2 0-2-2z" fill="#bdbdbd" />
          <path d="M48 19v27q0 2-2 2H7L48 17z" fill="#e0e0e0" />
          <path d="M5 20L20 6.500q4-3 8 0L44 20 24 36z" fill="#fff" />
          <path d="M15 16h12v-3.500l9 7.500-9 7.500V25H15z" fill="#ff6c2c" />
        </Svg>
        Forwarders
      </h1>
      <div role="status" className="mt-5 flex h-10 shrink-0 items-stretch rounded-[3px] border border-[#84b84c] bg-[#dff0d4] text-[13px] leading-5 text-[#333]">
        <span className="flex w-[41px] items-center justify-center bg-[#84b84c]">
          <Svg w={20} h={20}><circle cx="10" cy="10" r="10" fill="#dff0d4" /><path d="M5.500 10l3.300 3.500 6-6.500" fill="none" stroke="#84b84c" strokeWidth="3" /></Svg>
        </span>
        <p className="flex items-center pl-[9px] text-[14px]">All email sent to “admin@wrapart.uk” will now be copied to “wrapartuk@gmail.com”.</p>
      </div>
      <a href="#back" className="mx-auto mt-[49px] flex items-center gap-1 text-[14px] leading-5 text-[#428bca]">
        <Svg w={15} h={15}><circle cx="7.500" cy="7.500" r="7.500" fill="#428bca" /><path d="M7.500 3.500v2.500H12v3H7.500v2.500l-4.500-4z" fill="#fff" /></Svg>
        Go Back
      </a>
      <footer className="mt-auto mb-[18px] flex items-center justify-between px-px">
        <div className="flex items-end gap-[6px] pl-1 text-[12px] leading-5 text-[#666]">
          <span className="flex items-start text-[28px] leading-8 font-extrabold text-[#ff6c2c] italic">cPanel<span className="text-[6px] leading-3 not-italic">®</span></span>
          66.0.19
        </div>
        <nav className="flex gap-[30px] text-[14px] leading-5 text-[#428bca]">
          <a href="#home">Home</a>
          <a href="#trademarks">Trademarks</a>
          <a href="#documentation">Documentation</a>
        </nav>
      </footer>
    </div>
  );
}

export default function App() {
  return (
    <div className="grid h-screen min-h-[720px] grid-cols-2 overflow-hidden bg-black font-['Open_Sans','Noto_Sans',sans-serif]">
      <section className="flex min-h-0 min-w-0 flex-col">
        <Photoshop />
        <Taskbar tray label="Primary taskbar" />
      </section>
      <section className="flex min-h-0 min-w-0 flex-col">
        <BrowserChrome />
        <WebmailHeader />
        <WebmailPage />
        <Taskbar label="Secondary taskbar" />
      </section>
    </div>
  );
}
